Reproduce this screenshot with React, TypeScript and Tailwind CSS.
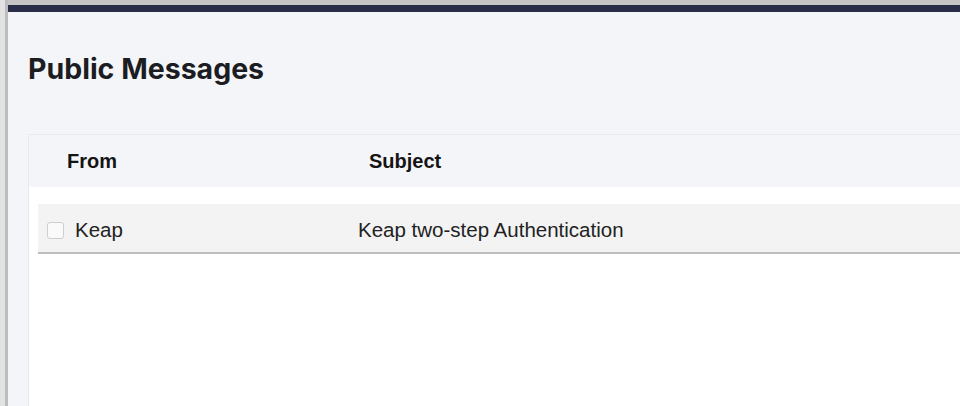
import React from 'react'

const rows = [{ from: 'Keap', subject: 'Keap two-step Authentication' }]

export default function App() {
  return (
    <div className="w-[960px] h-[406px] flex bg-white overflow-hidden font-['Liberation_Sans',Arial,sans-serif]">
      {/* window edge */}
      <div className="w-[5px] bg-[#e2e2e2]" />
      <div className="w-[3px] bg-[#bdbdbd]" />

      <div className="flex-1 flex flex-col min-w-0">
        <div className="h-[5px] bg-[#c6c6c6]" />
        <div className="h-[7px] bg-[#2a2d47]" />

        <main className="flex-1 bg-[#f4f5f9] pl-[20px] pt-[39px] flex flex-col">
          <h1 className="text-[28.5px] leading-[36px] font-bold text-[#1c1d22] font-['Inter',sans-serif]">
            Public Messages
          </h1>

          {/* messages table */}
          <section className="mt-[47px] flex-1 bg-white border-l border-t border-[#e9eaee]">
            <div className="h-[52px] bg-[#f4f5f9] flex items-center pl-[38px] text-[20px] font-bold text-[#141414]">
              <div className="w-[302px]">From</div>
              <div>Subject</div>
            </div>

            <div className="pt-[17px]">
              {rows.map((r) => (
                <div
                  key={r.subject}
                  className="ml-[9px] h-[50px] bg-[#f3f3f3] border-b-2 border-[#bdbdbd] flex items-center pl-[9px] pt-[4px] text-[20.5px] text-[#222]"
                >
                  <span className="w-[17px] h-[17px] rounded-[3px] border border-[#cfcfcf] bg-[#fafafa]" />
                  <span className="ml-[11px] w-[283px]">{r.from}</span>
                  <span>{r.subject}</span>
                </div>
              ))}
            </div>
          </section>
        </main>
      </div>
    </div>
  )
}
